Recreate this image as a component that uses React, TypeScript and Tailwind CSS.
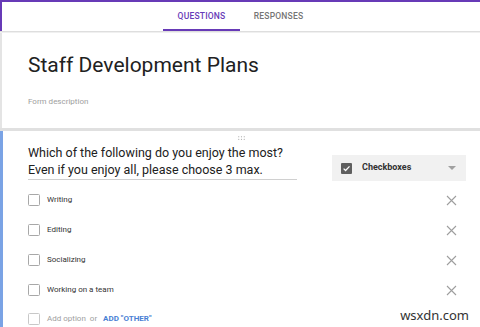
import React from "react";

const XIcon = () => (
  <svg width="11" height="11" viewBox="0 0 11 11" className="shrink-0">
    <path d="M1 1L10 10M10 1L1 10" stroke="#9e9e9e" strokeWidth="1.1" fill="none" />
  </svg>
);

const Box = ({ faded = false }: { faded?: boolean }) => (
  <div
    className={
      "w-[12px] h-[12px] shrink-0 rounded-[1.5px] border " +
      (faded ? "border-[#c8c8c8]" : "border-[#a8a8a8]")
    }
  />
);

const options = ["Writing", "Editing", "Socializing", "Working on a team"];

export default function App() {
  return (
    <div
      className="relative w-[480px] h-[327px] overflow-hidden bg-white text-[#212121]"
      style={{ fontFamily: "Roboto, 'Liberation Sans', sans-serif" }}
    >
      {/* top purple line */}
      <div className="h-[2px] bg-[#673ab7]" />
      {/* tabs */}
      <div className="h-[29px] border-l-2 border-[#673ab7] flex justify-center">
        <div className="w-[77px] flex items-center justify-center border-b-2 border-[#673ab7] ml-[-2px]">
          <span className="text-[8.5px] font-medium text-[#673ab7] tracking-[0.2px] pt-[2px]">QUESTIONS</span>
        </div>
        <div className="w-[77px] flex items-center justify-center border-b-2 border-transparent">
          <span className="text-[8.5px] font-medium text-[#757575] tracking-[0.2px] pt-[2px]">RESPONSES</span>
        </div>
      </div>
      <div className="h-[1px] bg-[#dedede]" />
      <div className="h-[1px] bg-[#f0f0f0]" />
      {/* header card */}
      <div className="h-[95px] border-l-2 border-[#e4e4e4] pl-[26px] pt-[18px]">
        <div className="text-[21px] leading-[28px] text-[#212121] whitespace-nowrap">Staff Development Plans</div>
        <div className="mt-[17px] text-[8px] leading-[12px] text-[#9e9e9e]">Form description</div>
      </div>
      <div className="h-[3px] bg-[#e0e0e0]" />
      {/* question card */}
      <div className="border-l-[3px] border-[#7aa3e5] h-[200px]">
        <div className="h-[13px] flex justify-center items-center">
          <svg width="7" height="4" viewBox="0 0 7 4">
            <circle cx="0.75" cy="0.75" r="0.6" fill="#9e9e9e" />
            <circle cx="3.5" cy="0.75" r="0.6" fill="#9e9e9e" />
            <circle cx="6.25" cy="0.75" r="0.6" fill="#9e9e9e" />
            <circle cx="0.75" cy="3.25" r="0.6" fill="#9e9e9e" />
            <circle cx="3.5" cy="3.25" r="0.6" fill="#9e9e9e" />
            <circle cx="6.25" cy="3.25" r="0.6" fill="#9e9e9e" />
          </svg>
        </div>
        <div className="flex items-end pl-[25px] pr-[14px]">
          <div className="w-[269px] border-b border-[#d0d0d0] pb-[1px] text-[12.5px] leading-[17px] text-[#212121] whitespace-nowrap">
            <div>Which of the following do you enjoy the most?</div>
            <div>Even if you enjoy all, please choose 3 max.</div>
          </div>
          <div className="ml-auto w-[134px] h-[26px] bg-[#f1f1f1] flex items-center pl-[9px] pr-[10px] mb-[-1px]">
            <div className="w-[11px] h-[11px] bg-[#5f5f5f] rounded-[1px] flex items-center justify-center">
              <svg width="9" height="9" viewBox="0 0 9 9">
                <path d="M1.6 4.6L3.6 6.5L7.5 2.4" stroke="#fff" strokeWidth="1.3" fill="none" />
              </svg>
            </div>
            <span className="ml-[10px] text-[9px] font-bold text-[#333]">Checkboxes</span>
            <svg width="8" height="4" viewBox="0 0 8 4" className="ml-auto">
              <path d="M0 0L8 0L4 4Z" fill="#a0a0a0" />
            </svg>
          </div>
        </div>
        <div className="mt-[5px] pl-[25px] pr-[23px]">
          {options.map((o) => (
            <div key={o} className="h-[30px] flex items-center">
              <Box />
              <span className="ml-[7px] text-[8px] text-[#333]">{o}</span>
              <div className="ml-auto">
                <XIcon />
              </div>
            </div>
          ))}
          <div className="h-[30px] flex items-center mt-[-1px]">
            <Box faded />
            <span className="ml-[7px] text-[8px] text-[#9e9e9e]">Add option</span>
            <span className="ml-[4px] text-[8px] text-[#9e9e9e]">or</span>
            <span className="ml-[6px] text-[8px] font-bold text-[#4a7fd4]">ADD "OTHER"</span>
          </div>
        </div>
      </div>
      <div
        className="absolute right-[11px] bottom-[2px] text-[13px] text-[#333]"
        style={{ fontFamily: "'Noto Sans', sans-serif" }}
      >
        wsxdn.com
      </div>
    </div>
  );
}
